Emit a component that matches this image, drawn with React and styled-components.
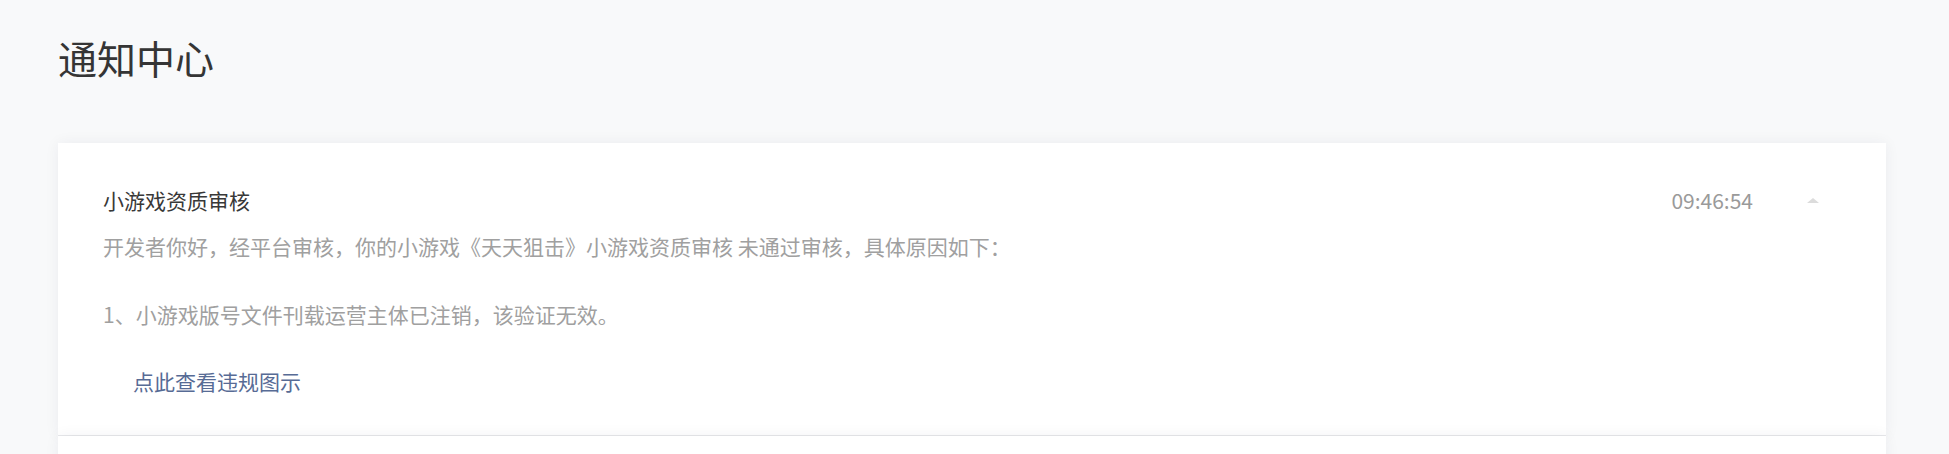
import React from 'react'
import styled, { createGlobalStyle } from 'styled-components'

const notice = {
    title: '小游戏资质审核',
    time: '09:46:54',
    intro: '开发者你好，经平台审核，你的小游戏《天天狙击》小游戏资质审核 未通过审核，具体原因如下：',
    reason: '1、小游戏版号文件刊载运营主体已注销，该验证无效。',
    link: '点此查看违规图示',
}

function NoticeCard({ notice }) {
    return (
        <Card>
            <CardHead>
                <CardTitle>{notice.title}</CardTitle>
                <Time>{notice.time}</Time>
                <Caret open />
            </CardHead>
            <CardBody>
                {notice.intro}
                <br />
                <br />
                {notice.reason}
            </CardBody>
            <DetailLink href="#">{notice.link}</DetailLink>
        </Card>
    )
}

export default function App() {
    return (
        <>
            <GlobalStyle />
            <Page>
                <PageTitle>通知中心</PageTitle>
                <List>
                    <NoticeCard notice={notice} />
                    {/* next notice, below the fold */}
                    <Card empty />
                </List>
            </Page>
        </>
    )
}

const GlobalStyle = createGlobalStyle`
    html, body {
        margin: 0;
        padding: 0;
        background: #f8f9fa;
        overflow: hidden;
    }
    body {
        font-family: "Noto Sans CJK SC", "Noto Sans", sans-serif;
    }
`

const Page = styled.div`
    padding: 30px 63px 0 58px;
    min-height: 454px;
    box-sizing: border-box;
`

const PageTitle = styled.h1`
    margin: 0 0 59px 0;
    font-size: 39px;
    line-height: 54px;
    font-weight: 400;
    color: #353535;
`

const List = styled.div`
    display: flex;
    flex-direction: column;
`

const Card = styled.div`
    background: #fff;
    padding: 42px 67px 37px 45px;
    min-height: ${p => (p.empty ? '120px' : 'auto')};
    border-bottom: 1px solid #e7e8ea;
    box-shadow: 0 0 14px rgba(30, 40, 60, 0.06);
`

const CardHead = styled.div`
    display: flex;
    align-items: center;
    height: 30px;
`

const CardTitle = styled.div`
    flex: 1;
    font-size: 21px;
    line-height: 30px;
    color: #383838;
`

const Time = styled.div`
    font-size: 21px;
    line-height: 30px;
    color: #9a9a9a;
`

const Caret = styled.span`
    margin-left: 54px;
    width: 0;
    height: 0;
    border-left: 6px solid transparent;
    border-right: 6px solid transparent;
    ${p => p.open
        ? 'border-bottom: 5px solid #dcdcdc;'
        : 'border-top: 5px solid #dcdcdc;'}
`

const CardBody = styled.div`
    margin-top: 14px;
    font-size: 21px;
    line-height: 34px;
    color: #a0a0a0;
`

const DetailLink = styled.a`
    display: block;
    margin: 33px 0 0 30px;
    font-size: 21px;
    line-height: 34px;
    color: #576b95;
    text-decoration: none;
`
